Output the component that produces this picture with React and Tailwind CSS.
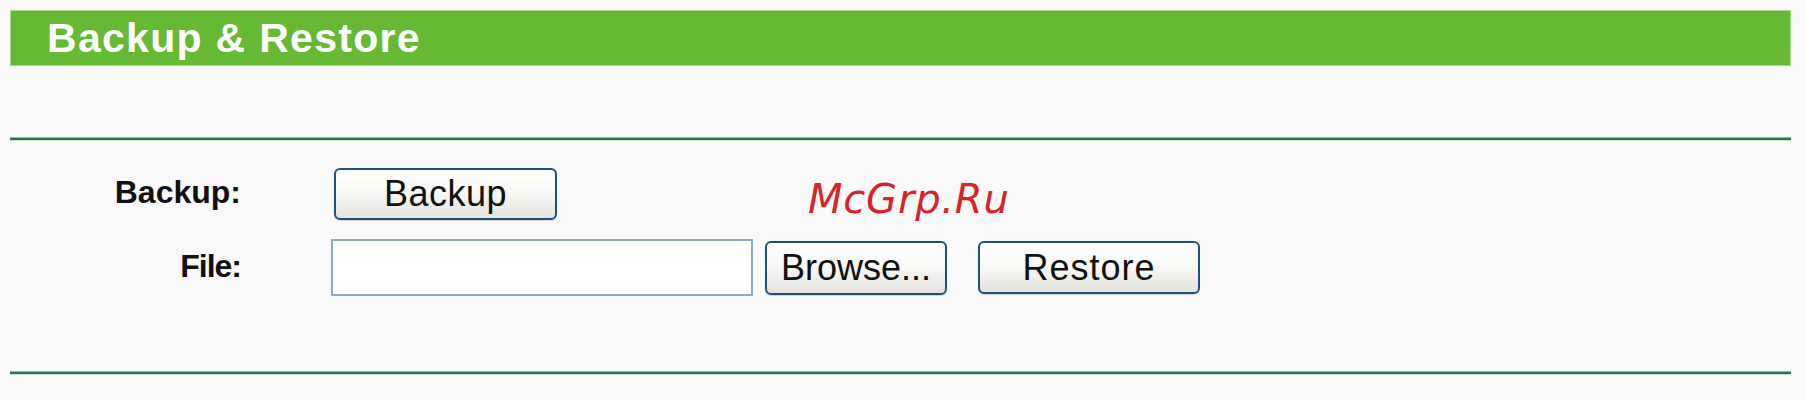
import React from 'react';

const sans = { fontFamily: '"Liberation Sans", Arial, sans-serif' };

const PushButton = ({ label, className = '' }) => (
    <button
        type="button"
        className={`flex items-center justify-center rounded-[6px] border-2 border-[#1d4f80] bg-gradient-to-b from-white via-[#f7f7f4] to-[#e4e3dc] text-[36px] leading-none text-[#111] shadow-[0_1px_1px_rgba(0,0,0,0.15)] ${className}`}
        style={sans}
    >
        {label}
    </button>
);

const Rule = () => (
    <div className="h-[4px] flex flex-col">
        <div className="h-[1px] bg-[#8cc3a2]" />
        <div className="h-[2px] bg-[#24754a]" />
        <div className="h-[1px] bg-[#c9e3d3]" />
    </div>
);

export default function App() {
    return (
        <div className="relative min-h-[400px] bg-[#f9f9f9] pt-[10px] pl-[10px] pr-[14px]" style={sans}>
            <header className="h-[56px] flex items-center pl-[36px] bg-[#66b933] border border-[#a9d98c]">
                <h1 className="text-[41px] leading-none font-bold text-white tracking-[1.3px]">Backup &amp; Restore</h1>
            </header>

            <div className="mt-[71px]">
                <Rule />
            </div>

            <div className="mt-[27px] flex items-center">
                <span className="w-[231px] text-right text-[32px] font-bold text-[#111] leading-none -mt-[4px]">Backup:</span>
                <PushButton label="Backup" className="ml-[93px] w-[223px] h-[52px] tracking-[0.5px]" />
            </div>

            <div className="mt-[19px] flex items-center">
                <span className="w-[231px] text-right text-[32px] font-bold text-[#111] leading-none -mt-[4px] tracking-[-1px]">File:</span>
                <input
                    type="text"
                    className="ml-[90px] w-[422px] h-[57px] bg-white border-2 border-[#8aa8c8] outline-none"
                />
                <PushButton label="Browse..." className="ml-[12px] w-[182px] h-[54px]" />
                <PushButton label="Restore" className="ml-[31px] w-[222px] h-[53px] tracking-[1px]" />
            </div>

            <div className="mt-[75px]">
                <Rule />
            </div>

            <span
                className="absolute left-[808px] top-[179px] text-[40px] leading-none italic text-[#d9232b] tracking-[0.8px]"
                style={{ fontFamily: '"DejaVu Sans", sans-serif' }}
            >
                McGrp.Ru
            </span>
        </div>
    );
}
